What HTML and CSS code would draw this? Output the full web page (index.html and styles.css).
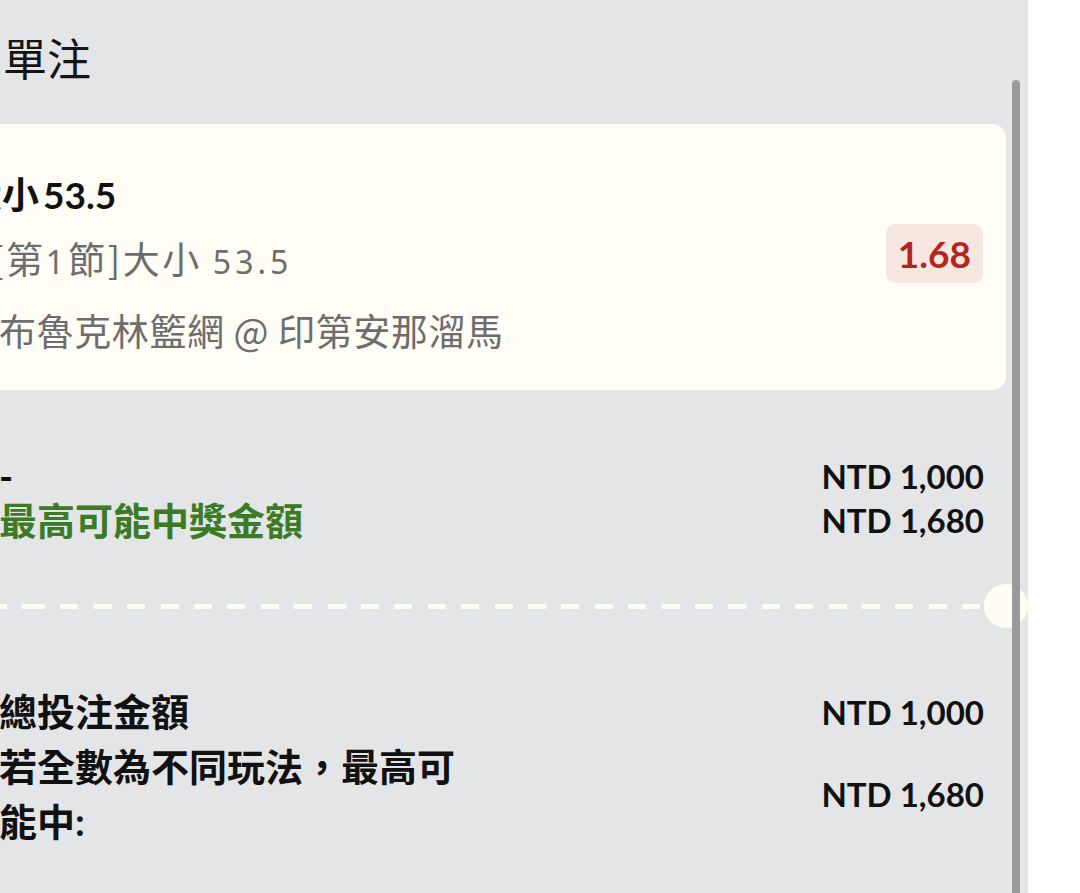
FILE: index.html
```html
<!DOCTYPE html>
<html lang="zh-Hant">
<head>
<meta charset="utf-8">
<title>單注</title>
<link rel="stylesheet" href="styles.css">
</head>
<body>
<div class="page">
  <div class="panel">
    <div class="content">
      <div class="header">單注</div>

      <div class="card">
        <div class="card-info">
          <div class="sel-title">大小 53.5</div>
          <div class="market">[第<span class="n">1</span>節]大小 <span class="n">53.5</span></div>
          <div class="match">布魯克林籃網 @ 印第安那溜馬</div>
        </div>
        <div class="odds">1.68</div>
      </div>

      <div class="rows rows-tight">
        <div class="row">
          <div class="label">-</div>
          <div class="value">NTD 1,000</div>
        </div>
        <div class="row">
          <div class="label green">最高可能中獎金額</div>
          <div class="value">NTD 1,680</div>
        </div>
      </div>

      <div class="divider"></div>

      <div class="rows rows-loose">
        <div class="row">
          <div class="label">總投注金額</div>
          <div class="value">NTD 1,000</div>
        </div>
        <div class="row">
          <div class="label">若全數為不同玩法，最高可能中:</div>
          <div class="value">NTD 1,680</div>
        </div>
      </div>
    </div>
    <div class="scroll-thumb"></div>
  </div>
</div>
</body>
</html>
```

FILE: styles.css
```css
* { box-sizing: border-box; }

html, body {
  margin: 0;
  padding: 0;
}

body {
  width: 1080px;
  height: 893px;
  overflow: hidden;
  background: #ffffff;
  font-family: "Lato", "Noto Sans CJK TC", sans-serif;
  color: #111111;
}

.page {
  display: flex;
  height: 893px;
}

.panel {
  position: relative;
  width: 1028px;
  height: 893px;
  background: #e4e5e7;
  overflow: hidden;
}

.content {
  width: 1047px;
  margin-left: -41px;
  padding-top: 31px;
}

.header {
  padding-left: 44px;
  font-family: "Noto Sans CJK TC", sans-serif;
  font-size: 44px;
  line-height: 52px;
  font-weight: 400;
  color: #141414;
}

.card {
  margin-top: 41px;
  height: 266px;
  background: #fffdf5;
  border-radius: 14px;
  padding: 43px 23px 0 40px;
  display: flex;
  justify-content: space-between;
  align-items: flex-start;
}

.card-info {
  display: flex;
  flex-direction: column;
}

.sel-title {
  margin-left: -34px;
  font-size: 37px;
  font-weight: 700;
  line-height: 56px;
  word-spacing: -5px;
  color: #111111;
}

.market,
.match {
  font-family: "Noto Sans CJK TC", sans-serif;
  font-size: 37px;
  line-height: 56px;
  font-weight: 400;
  color: #6d6d6d;
}

.market {
  margin-top: 7px;
  margin-left: -8px;
  letter-spacing: 2.6px;
}

.match {
  margin-top: 12px;
  letter-spacing: 0.6px;
}

.n {
  font-family: "Noto Sans", sans-serif;
  font-size: 32px;
  letter-spacing: 4px;
}

.odds {
  margin-top: 57px;
  height: 59px;
  padding: 0 12px;
  border-radius: 9px;
  background: #f8e6e0;
  color: #b3261e;
  font-size: 37px;
  font-weight: 700;
  line-height: 59px;
}

.rows {
  padding: 0 22px 0 40px;
  display: flex;
  flex-direction: column;
}

.rows-tight { margin-top: 64px; }
.rows-loose { margin-top: 75px; }

.row {
  display: flex;
  justify-content: space-between;
  align-items: center;
}

.label {
  font-size: 38px;
  font-weight: 700;
  color: #111111;
}

.rows-tight .label { line-height: 44px; }
.rows-loose .label { line-height: 55px; max-width: 470px; }

.label.green { color: #3b7b25; }

.value {
  font-size: 33px;
  font-weight: 700;
  color: #111111;
  white-space: nowrap;
}

.divider {
  position: relative;
  margin-top: 62px;
  margin-left: 40px;
  width: 1007px;
  height: 5px;
  background-image: repeating-linear-gradient(90deg, #fffdf3 0 18px, transparent 18px 33.4px);
  background-position: 28px 0;
}

.divider::after {
  content: "";
  position: absolute;
  right: -22px;
  top: -20px;
  width: 44px;
  height: 44px;
  border-radius: 50%;
  background: #fffdf3;
}

.scroll-thumb {
  position: absolute;
  left: 1012px;
  top: 80px;
  width: 8px;
  height: 840px;
  border-radius: 4px;
  background: #9a9a9a;
}
```
